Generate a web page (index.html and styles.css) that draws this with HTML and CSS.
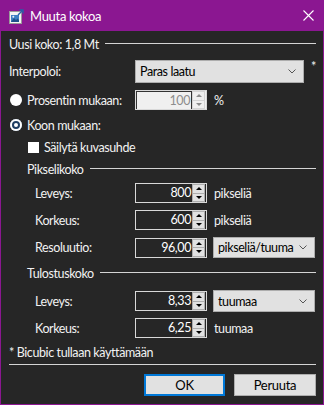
FILE: index.html
```html
<!DOCTYPE html>
<html lang="fi">
<head>
  <meta charset="UTF-8">
  <meta name="viewport" content="width=device-width, initial-scale=1.0">
  <title>Muuta kokoa</title>
  <link rel="stylesheet" href="styles.css">
</head>
<body>
  <div class="window">
    <div class="titlebar">
      <svg class="app-icon" width="15" height="15" viewBox="0 0 15 15">
        <rect x="0.5" y="2.5" width="12" height="12" fill="#f4f4f4" stroke="#9a9a9a"/>
        <rect x="2" y="6" width="8" height="7" fill="#3d7fc4"/>
        <path d="M2 13 L5 9 L7 11 L8.5 9.5 L10 11 L10 13 Z" fill="#1d4f8a"/>
        <circle cx="4.3" cy="7.8" r="1" fill="#e8f0fa"/>
        <path d="M9 6 L13.5 1.5 M10.5 1 L14 1 L14 4.5" stroke="#2a5fa8" stroke-width="1.4" fill="none"/>
      </svg>
      <span class="title">Muuta kokoa</span>
      <svg class="close" width="11" height="11" viewBox="0 0 11 11">
        <path d="M0.5 0.5 L10.5 10.5 M10.5 0.5 L0.5 10.5" stroke="#fff" stroke-width="1.1"/>
      </svg>
    </div>

    <div class="content">
      <div class="heading top-heading">
        <span>Uusi koko: 1,8 Mt</span>
        <i class="rule"></i>
      </div>

      <div class="field row-interp">
        <span class="lbl">Interpoloi:</span>
        <div class="combo combo-interp">
          <span>Paras laatu</span>
          <svg class="chev" width="8" height="5" viewBox="0 0 8 5"><path d="M0.5 0.5 L4 4 L7.5 0.5" stroke="#555" fill="none"/></svg>
        </div>
        <span class="star">*</span>
      </div>

      <div class="field row-percent">
        <span class="lbl"><span class="radio"></span>Prosentin mukaan:</span>
        <div class="spin disabled">
          <span class="spin-value">100</span>
          <span class="spin-btns"><b class="up"></b><b class="down"></b></span>
        </div>
        <span class="unit">%</span>
      </div>

      <div class="option row-bysize">
        <span class="radio checked"></span>Koon mukaan:
      </div>

      <div class="option row-keep">
        <span class="check"></span>Säilytä kuvasuhde
      </div>

      <div class="heading sub-heading row-pixels">
        <span>Pikselikoko</span>
        <i class="rule"></i>
      </div>

      <div class="field sub row-pw">
        <span class="lbl">Leveys:</span>
        <div class="spin">
          <span class="spin-value">800</span>
          <span class="spin-btns"><b class="up"></b><b class="down"></b></span>
        </div>
        <span class="unit">pikseliä</span>
      </div>

      <div class="field sub row-ph">
        <span class="lbl">Korkeus:</span>
        <div class="spin">
          <span class="spin-value">600</span>
          <span class="spin-btns"><b class="up"></b><b class="down"></b></span>
        </div>
        <span class="unit">pikseliä</span>
      </div>

      <div class="field sub row-res">
        <span class="lbl">Resoluutio:</span>
        <div class="spin">
          <span class="spin-value">96,00</span>
          <span class="spin-btns"><b class="up"></b><b class="down"></b></span>
        </div>
        <div class="combo combo-unit">
          <span>pikseliä/tuuma</span>
          <svg class="chev" width="8" height="5" viewBox="0 0 8 5"><path d="M0.5 0.5 L4 4 L7.5 0.5" stroke="#555" fill="none"/></svg>
        </div>
      </div>

      <div class="heading sub-heading row-print">
        <span>Tulostuskoko</span>
        <i class="rule"></i>
      </div>

      <div class="field sub row-iw">
        <span class="lbl">Leveys:</span>
        <div class="spin">
          <span class="spin-value">8,33</span>
          <span class="spin-btns"><b class="up"></b><b class="down"></b></span>
        </div>
        <div class="combo combo-unit">
          <span>tuumaa</span>
          <svg class="chev" width="8" height="5" viewBox="0 0 8 5"><path d="M0.5 0.5 L4 4 L7.5 0.5" stroke="#555" fill="none"/></svg>
        </div>
      </div>

      <div class="field sub row-ih">
        <span class="lbl">Korkeus:</span>
        <div class="spin">
          <span class="spin-value">6,25</span>
          <span class="spin-btns"><b class="up"></b><b class="down"></b></span>
        </div>
        <span class="unit">tuumaa</span>
      </div>

      <div class="note">* Bicubic tullaan käyttämään</div>
      <div class="separator"></div>

      <div class="buttons">
        <button class="btn default">OK</button>
        <button class="btn">Peruuta</button>
      </div>
    </div>
  </div>
</body>
</html>
```

FILE: styles.css
```css
* {
  box-sizing: border-box;
}
body {
  margin: 0;
  background-color: #8b1791;
  font-family: Lato, "Noto Sans", sans-serif;
  font-size: 12.5px;
  letter-spacing: -0.4px;
  color: #f2f2f2;
}
.window {
  width: 324px;
  height: 405px;
  border: 1px solid #8b1791;
  border-top: none;
  background-color: #262626;
  display: flex;
  flex-direction: column;
}
.titlebar {
  height: 31px;
  margin: 0 -1px;
  background-color: #8b1791;
  display: flex;
  align-items: center;
  padding: 0 10px 0 9px;
}
.app-icon {
  margin-top: 1px;
}
.title {
  margin-left: 6px;
  font-size: 13px;
  letter-spacing: -0.3px;
  color: #fff;
  flex: 1;
}
.content {
  padding: 0 7px 0 8px;
}
.heading {
  display: flex;
  align-items: center;
  height: 16px;
}
.heading .rule {
  flex: 1;
  height: 1px;
  background-color: #d4d4d4;
  margin-left: 6px;
  margin-top: -1px;
}
.top-heading {
  margin-top: 5px;
}
.sub-heading {
  padding-left: 18px;
}
.field {
  display: flex;
  align-items: center;
}
.lbl {
  width: 126px;
  display: flex;
  align-items: center;
}
.field.sub .lbl {
  padding-left: 26px;
}
.row-interp {
  margin-top: 8px;
  height: 23px;
}
.row-percent {
  margin-top: 7px;
  height: 20px;
}
.row-bysize {
  margin-top: 5px;
  height: 20px;
}
.row-keep {
  margin-top: 3px;
  height: 18px;
  padding-left: 19px;
}
.row-pixels {
  margin-top: 5px;
}
.row-pw {
  margin-top: 6px;
  height: 20px;
}
.row-ph {
  margin-top: 7px;
  height: 20px;
}
.row-res {
  margin-top: 7px;
  height: 21px;
}
.row-print {
  margin-top: 7px;
}
.row-iw {
  margin-top: 9px;
  height: 22px;
}
.row-ih {
  margin-top: 6px;
  height: 20px;
}
.option {
  display: flex;
  align-items: center;
}
.radio {
  width: 12px;
  height: 12px;
  border-radius: 50%;
  background-color: #fff;
  margin: 0 5px 0 1px;
  flex: none;
}
.radio.checked {
  box-shadow: inset 0 0 0 2px #fff, inset 0 0 0 4px #1f3e62;
}
.check {
  width: 11px;
  height: 11px;
  background-color: #fff;
  margin-right: 5px;
}
.combo {
  height: 100%;
  background-color: #e1e1e1;
  border: 1px solid #adadad;
  color: #000;
  display: flex;
  align-items: center;
  justify-content: space-between;
  padding: 0 7px 0 4px;
  white-space: nowrap;
}
.combo-interp {
  width: 169px;
}
.combo-unit {
  width: 102px;
  margin-left: 6px;
}
.chev {
  flex: none;
}
.star {
  margin-left: 7px;
  align-self: flex-start;
  margin-top: -1px;
}
.unit {
  margin-left: 7px;
}
.spin {
  width: 72px;
  height: 20px;
  border: 1px solid #d8d8d8;
  display: flex;
  align-self: center;
  color: #fff;
}
.spin-value {
  flex: 1;
  text-align: right;
  line-height: 18px;
  padding-right: 1px;
}
.spin-btns {
  width: 13px;
  margin: 0 1px 0 0;
  display: flex;
  flex-direction: column;
}
.spin-btns b {
  flex: 1;
  background-color: #e1e1e1;
  border: 1px solid #adadad;
  display: flex;
  align-items: center;
  justify-content: center;
}
.spin-btns b + b {
  border-top: none;
}
.spin-btns .up::after {
  content: "";
  border-left: 3px solid transparent;
  border-right: 3px solid transparent;
  border-bottom: 3px solid #000;
}
.spin-btns .down::after {
  content: "";
  border-left: 3px solid transparent;
  border-right: 3px solid transparent;
  border-top: 3px solid #000;
}
.spin.disabled {
  background-color: #f0f0f0;
  border-color: #d9d9d9;
  color: #8d8d8d;
}
.spin.disabled .spin-value {
  border-left: 1px solid #333;
  border-top: 1px solid #333;
  border-right: 1px solid #333;
}
.spin.disabled .spin-btns b {
  background-color: #f0f0f0;
  border-color: #d4d4d4;
}
.spin.disabled .spin-btns b::after {
  border-bottom-color: #8d8d8d;
  border-top-color: #8d8d8d;
}
.note {
  margin-top: 6px;
  height: 16px;
  display: flex;
  align-items: center;
}
.separator {
  margin-top: 4px;
  height: 1px;
  background-color: #d4d4d4;
}
.buttons {
  margin-top: 9px;
  display: flex;
  justify-content: flex-end;
  gap: 9px;
}
.btn {
  width: 82px;
  height: 22px;
  font-family: inherit;
  font-size: 13px;
  letter-spacing: -0.3px;
  color: #000;
  background-color: #e1e1e1;
  border: 1px solid #adadad;
  padding: 0;
}
.btn.default {
  width: 81px;
  border: 2px solid #0078d7;
}
```
